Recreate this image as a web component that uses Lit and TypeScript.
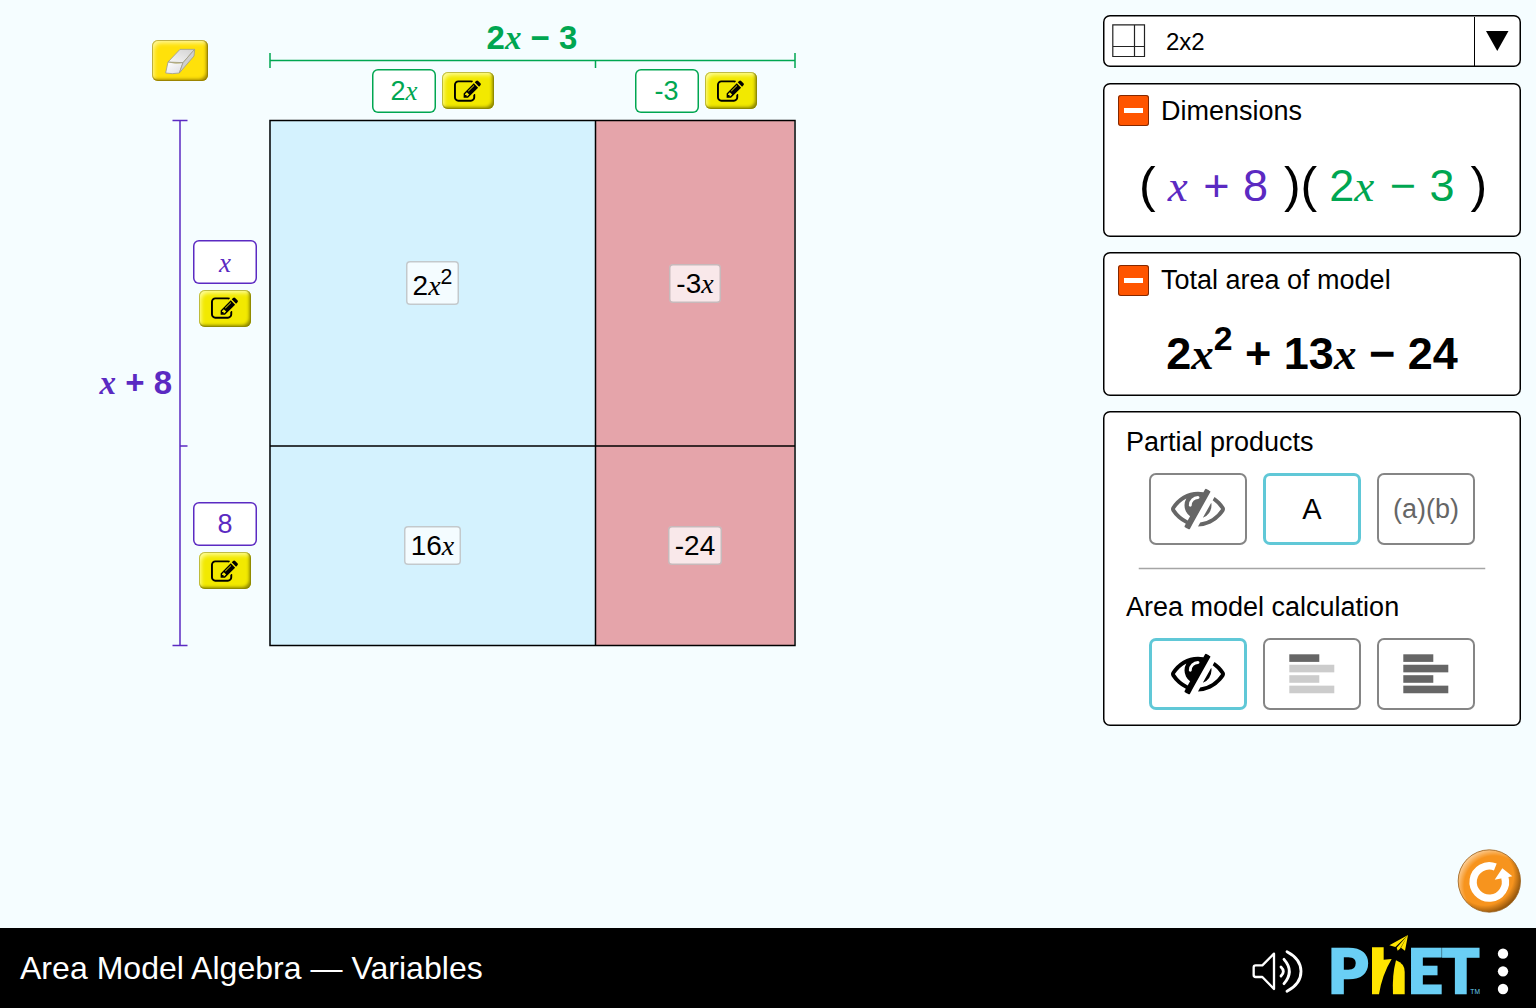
import { LitElement, html, css, svg } from "lit";
import { customElement, property } from "lit/decorators.js";
import { classMap } from "lit/directives/class-map.js";

const X = html`<i class="var">x</i>`;

const variableStyles = css`
  .var {
    font-family: "Liberation Serif", "Times New Roman", serif;
    font-style: italic;
    line-height: 0;
  }
`;

/** Yellow button with a pencil-and-square icon. */
@customElement("edit-button")
class EditButton extends LitElement {
  static styles = css`
    :host { display: block; width: 52px; height: 37px; flex: none; }
    .face {
      box-sizing: border-box; width: 52px; height: 37px; border-radius: 6px;
      background: #f2e900;
      box-shadow: inset 0 0 0 1px rgba(130, 125, 0, 0.5),
        inset -3px -3px 3px -1px rgba(125, 120, 0, 0.8),
        inset 3px 4px 4px -1px rgba(255, 255, 170, 0.9);
      display: flex; align-items: center; justify-content: center;
    }
    svg { display: block; margin-right: 1px; }
  `;
  render() {
    return html`<div class="face">
      <svg width="27" height="22" viewBox="0 110 1792 1440">
        <path d="M888 1184l116-116-152-152-116 116v56h96v96h56zm440-720q-16-16-33 1l-350 350q-17 17-1 33t33-1l350-350q17-17 1-33zm80 594v190q0 119-84.500 203.500t-203.500 84.500h-832q-119 0-203.500-84.500t-84.500-203.500v-832q0-119 84.500-203.500t203.500-84.500h832q63 0 117 25 15 7 18 23 3 17-9 29l-49 49q-14 14-32 8-23-6-45-6h-832q-66 0-113 47t-47 113v832q0 66 47 113t113 47h832q66 0 113-47t47-113v-126q0-13 9-22l64-64q15-15 35-7t20 29zm-96-738l288 288-672 672h-288v-288zm444 132l-92 92-288-288 92-92q28-28 68-28t68 28l152 152q28 28 28 68t-28 68z"/>
      </svg>
    </div>`;
  }
}

@customElement("collapse-button")
class CollapseButton extends LitElement {
  static styles = css`
    :host { display: block; width: 31px; height: 31px; flex: none; }
    .box {
      width: 31px; height: 31px; border-radius: 3px; background: #ff5500;
      box-shadow: inset 0 0 0 1px rgba(90, 25, 0, 0.75);
      display: flex; align-items: center; justify-content: center;
    }
    .bar { width: 19px; height: 5px; background: #fff; }
  `;
  render() {
    return html`<div class="box"><div class="bar"></div></div>`;
  }
}

@customElement("radio-tile")
class RadioTile extends LitElement {
  @property({ type: Boolean }) selected = false;
  static styles = css`
    :host { display: block; width: 98px; height: 72px; }
    .tile {
      width: 98px; height: 72px; border-radius: 7px; background: #fff; color: #666;
      box-shadow: inset 0 0 0 2px #858585;
      display: flex; align-items: center; justify-content: center;
      font-size: 27px; line-height: 30px;
    }
    .tile.selected { color: #000; box-shadow: inset 0 0 0 3px #60c8d7; }
  `;
  render() {
    return html`<div class=${classMap({ tile: true, selected: this.selected })}><slot></slot></div>`;
  }
}

@customElement("area-model")
class AreaModel extends LitElement {
  static styles = [
    variableStyles,
    css`
      :host { display: block; }
      .model {
        display: grid;
        grid-template-columns: 75px 16px 81px 526px;
        grid-template-rows: 53px 16px 51px 526px;
        padding-left: 97px;
      }
      .eraser {
        grid-column: 1 / 4; grid-row: 1 / 4;
        padding: 40px 0 0 55px;
      }
      .eraser-face {
        width: 56px; height: 41px; border-radius: 6px; background: #ffe10a;
        box-shadow: inset 0 0 0 1px rgba(130, 110, 0, 0.5),
          inset -3px -3px 3px -1px rgba(150, 125, 0, 0.8),
          inset 3px 4px 4px -1px rgba(255, 250, 170, 0.9);
        display: flex; align-items: center; justify-content: center;
      }
      .total { font-weight: bold; font-size: 33px; line-height: 38px; white-space: pre; }
      .total-x { grid-column: 4; grid-row: 1; color: #00a651; text-align: center; padding-top: 19px; }
      .total-y { grid-column: 1; grid-row: 4; color: #5b2ac2; text-align: right; align-self: center; }
      .line-x { grid-column: 4; grid-row: 2; }
      .line-y { grid-column: 2; grid-row: 4; }
      svg { display: block; overflow: visible; }
      .edits-x {
        grid-column: 4; grid-row: 3; display: grid;
        grid-template-columns: 326px 199px; justify-items: center; margin-left: 1px;
      }
      .edits-y {
        grid-column: 3; grid-row: 4; display: grid; padding-right: 7px;
        grid-template-rows: 326px 199px; align-items: center; justify-items: center;
      }
      .pair { display: flex; align-items: center; gap: 6px; height: 44px; }
      .edits-x edit-button { margin-top: -1px; }
      .edits-y .pair { flex-direction: column; height: auto; }
      .value {
        width: 64px; height: 44px; border-radius: 6px; background: #fff;
        font-size: 27px; line-height: 44px; text-align: center;
      }
      .value.single .var { position: relative; top: 1px; }
      .edits-x .value { color: #00a651; box-shadow: inset 0 0 0 1.5px #00a651; }
      .edits-y .value { color: #5b2ac2; box-shadow: inset 0 0 0 1.5px #5b2ac2; }
      .area { grid-column: 4; grid-row: 4; position: relative; }
      .cells { display: grid; grid-template-columns: 327px 198px; grid-template-rows: 326px 199px; }
      .cell { display: flex; align-items: center; justify-content: center; background: #d4f2fe; }
      .cell.negative { background: #e5a4aa; }
      .product {
        box-sizing: border-box; height: 39px; padding: 0 7px; border-radius: 4px;
        background: rgba(255, 255, 255, 0.75); box-shadow: inset 0 0 0 1.5px rgba(0, 0, 0, 0.2);
        font-size: 28px; line-height: 39px; white-space: nowrap;
      }
      .product.tall { height: 44px; line-height: 49px; }
      .sup { font-size: 0.76em; line-height: 0; position: relative; top: -0.5em; }
      .lines { position: absolute; inset: 0; }
    `,
  ];
  render() {
    return html`<div class="model">
      <div class="eraser">
        <div class="eraser-face">
          <svg width="32" height="26" viewBox="0 0 96 78">
            <defs>
              <linearGradient id="er" x1="0" y1="0" x2="1" y2="1">
                <stop offset="0" stop-color="#fff"/><stop offset="1" stop-color="#dcdce2"/>
              </linearGradient>
              <linearGradient id="er-top" x1="0" y1="1" x2="1" y2="0">
                <stop offset="0" stop-color="#f6f6f6"/><stop offset="1" stop-color="#d2d2d2"/>
              </linearGradient>
            </defs>
            <g stroke="#a09d8c" stroke-width="2.500" stroke-linejoin="round">
              <path d="M48 4H92L57 44L12 42Z" fill="url(#er-top)"/>
              <path d="M12 42Q34 48 57 44L46 75Q24 79 5 75Z" fill="url(#er)"/>
              <path d="M92 4L90 24L46 75L57 44Z" fill="#cfcfcf"/>
            </g>
          </svg>
        </div>
      </div>
      <div class="total total-x">2${X} − 3</div>
      <svg class="line-x" width="526" height="16" viewBox="269 53 526 16">
        <path d="M270 60.500H795M270 53V68M795 53V68M595.500 60.500V68" fill="none" stroke="#00a651" stroke-width="1.500"/>
      </svg>
      <div class="edits-x">
        <div class="pair"><div class="value">2${X}</div><edit-button></edit-button></div>
        <div class="pair"><div class="value">-3</div><edit-button></edit-button></div>
      </div>
      <div class="total total-y">${X} + 8</div>
      <svg class="line-y" width="16" height="526" viewBox="172 120 16 526">
        <path d="M180 120.500V645.500M172.500 120.500H187.500M172.500 645.500H187.500M180 446H187.500" fill="none" stroke="#5b2ac2" stroke-width="1.500"/>
      </svg>
      <div class="edits-y">
        <div class="pair"><div class="value single">${X}</div><edit-button></edit-button></div>
        <div class="pair"><div class="value">8</div><edit-button></edit-button></div>
      </div>
      <div class="area">
        <div class="cells">
          <div class="cell"><div class="product tall">2${X}<span class="sup">2</span></div></div>
          <div class="cell negative"><div class="product">-3${X}</div></div>
          <div class="cell"><div class="product">16${X}</div></div>
          <div class="cell negative"><div class="product">-24</div></div>
        </div>
        <svg class="lines" width="526" height="526" viewBox="269 120 526 526">
          <path d="M270 120.500H795V645.500H270ZM595.500 120.500V645.500M270 446H795" fill="none" stroke="#000" stroke-width="1.500"/>
        </svg>
      </div>
    </div>`;
  }
}

const eye = html`<svg class="icon" width="54" height="54" viewBox="0 60 1792 1792" fill="currentColor">
  <path d="M555 1335l78-141q-87-63-136-159t-49-203q0-121 61-225-229 117-381 353 167 258 427 375zm389-759q0-20-14-34t-34-14q-125 0-214.500 89.500t-89.500 214.500q0 20 14 34t34 14 34-14 14-34q0-86 61-147t147-61q20 0 34-14t14-34zm363-191q0 7-1 9-105 188-315 566t-316 567l-49 89q-10 16-28 16-12 0-134-70-16-10-16-28 0-12 44-87-143-65-263.500-173t-208.500-245q-20-31-20-69t20-69q153-235 380-371t496-136q89 0 180 17l54-97q10-16 28-16 5 0 18 6t31 15.500 33 18.500 31.500 18.500 19.500 11.500q16 10 16 27zm37 447q0 139-79 253.500t-209 164.500l280-502q8 45 8 84zm448 128q0 35-20 69-39 64-109 145-150 172-347.500 267t-419.500 95l74-132q212-18 392.500-137t301.500-307q-115-179-282-294l63-112q95 64 182.500 153t144.500 184q20 34 20 69z"/>
</svg>`;

const bars = (colors: string[]) => html`<svg class="icon" width="46" height="40" viewBox="0 0 46 40">
  ${colors.map((c, i) => svg`<rect x="0.300" y=${0.3 + i * 10.45} width=${i % 2 ? 45 : 30} height="7.600" fill=${c}/>`)}
</svg>`;

@customElement("app-root")
class AppRoot extends LitElement {
  static styles = [
    variableStyles,
    css`
      :host {
        display: flex; flex-direction: column; width: 1536px; height: 1008px; overflow: hidden;
        font-family: "Liberation Sans", Arial, sans-serif; color: #000; background: #f5fdff;
      }
      svg { display: block; }
      .stage { height: 928px; display: flex; justify-content: space-between; }
      .side { width: 418px; margin-right: 15px; display: flex; flex-direction: column; height: 928px; }
      .panel { box-sizing: border-box; border-radius: 7px; background: #fff; box-shadow: inset 0 0 0 1.5px #000; }
      .combo { height: 52px; margin-top: 15px; display: flex; align-items: center; }
      .combo-icon { margin-left: 9px; }
      .combo-text { font-size: 24px; line-height: 28px; margin-left: 20px; padding-top: 2px; flex: 1; }
      .combo-arrow {
        width: 46px; height: 49px; border-left: 1px solid #000;
        display: flex; align-items: center; justify-content: center;
      }
      .combo-arrow svg { margin-right: 1px; }
      .dims { height: 154px; margin-top: 16px; padding-top: 12px; }
      .dims .head span { padding-top: 2px; }
      .sum { height: 144px; margin-top: 15px; padding-top: 13px; }
      .head { display: flex; align-items: center; height: 31px; padding-left: 15px; gap: 12px; font-size: 27px; }
      .formula { display: flex; white-space: pre; font-size: 45px; line-height: 60px; }
      .factors { padding-left: 36px; margin-top: 30px; word-spacing: 1px; }
      .factors .var { padding-right: 2px; }
      .paren { font-size: 50px; line-height: 58px; }
      .fx { color: #5b2ac2; margin: 0 16px 0 12px; }
      .fy { color: #00a651; margin: 0 16px 0 12px; }
      .polynomial { justify-content: center; font-weight: bold; margin-top: 28px; }
      .sup { font-size: 0.75em; position: relative; top: -0.56em; line-height: 0; }
      .options { height: 315px; margin-top: 15px; padding-top: 16px; }
      .label { font-size: 27px; line-height: 30px; padding-left: 23px; }
      .tiles { display: flex; gap: 16px; padding-left: 46px; margin-top: 16px; }
      .letter { font-size: 29px; }
      .raised { padding-bottom: 1px; }
      .rule { height: 1px; margin: 23px 36px 0; background: #a5a5a5; box-shadow: 0 0 0 0.25px #a5a5a5; }
      .label.second { margin-top: 23px; }
      .reset { align-self: flex-end; margin-top: auto; margin-bottom: 15px; }
      .footer {
        height: 80px; background: #000; color: #fff; display: flex; align-items: center; justify-content: space-between;
      }
      .title { font-size: 32px; line-height: 40px; padding-left: 20px; letter-spacing: 0.03px; }
      .brand { flex: none; }
      .logo-text {
        font-family: Lato, "Open Sans", sans-serif; font-weight: 900; font-size: 182px;
        fill: #6acff5; stroke: #6acff5; stroke-width: 8px;
      }
      .tm { font-family: "Liberation Sans", sans-serif; fill: #6acff5; }
    `,
  ];

  render() {
    return html`
      <div class="stage">
        <area-model></area-model>
        <div class="side">
          <div class="panel combo">
            <svg class="combo-icon" width="34" height="34" viewBox="0 0 34 34">
              <path d="M0.800 0.800H32.500V32.500H0.800ZM22.500 0.800V32.500M0.800 22.500H32.500" fill="none" stroke="#222" stroke-width="1.200"/>
            </svg>
            <span class="combo-text">2x2</span>
            <div class="combo-arrow">
              <svg width="23" height="20" viewBox="0 0 23 20"><path d="M0 0H22.500L11.250 20Z"/></svg>
            </div>
          </div>

          <div class="panel dims">
            <div class="head"><collapse-button></collapse-button><span>Dimensions</span></div>
            <div class="formula factors"><span class="paren">(</span><span class="fx">${X} + 8</span><span class="paren">)</span><span class="paren">(</span><span class="fy">2${X} − 3</span><span class="paren">)</span></div>
          </div>

          <div class="panel sum">
            <div class="head"><collapse-button></collapse-button><span>Total area of model</span></div>
            <div class="formula polynomial"><span>2${X}<span class="sup">2</span> + 13${X} − 24</span></div>
          </div>

          <div class="panel options">
            <div class="label">Partial products</div>
            <div class="tiles">
              <radio-tile>${eye}</radio-tile>
              <radio-tile selected><span class="letter">A</span></radio-tile>
              <radio-tile><span class="raised">(a)(b)</span></radio-tile>
            </div>
            <div class="rule"></div>
            <div class="label second">Area model calculation</div>
            <div class="tiles">
              <radio-tile selected>${eye}</radio-tile>
              <radio-tile>${bars(["#666", "#ccc", "#ccc", "#ccc"])}</radio-tile>
              <radio-tile>${bars(["#666", "#666", "#666", "#666"])}</radio-tile>
            </div>
          </div>

          <svg class="reset" width="64" height="64" viewBox="0 0 192 192">
            <defs>
              <radialGradient id="dark" cx="0.420" cy="0.420" r="0.600">
                <stop offset="0.780" stop-color="#f7941e"/><stop offset="1" stop-color="#94560c"/>
              </radialGradient>
              <radialGradient id="light" cx="0.580" cy="0.580" r="0.620">
                <stop offset="0.780" stop-color="#fff" stop-opacity="0"/><stop offset="1" stop-color="#fff" stop-opacity="0.600"/>
              </radialGradient>
            </defs>
            <circle cx="97" cy="96" r="93.500" fill="url(#dark)"/>
            <circle cx="97" cy="96" r="93.500" fill="url(#light)" stroke="#9c6420" stroke-width="2.500"/>
            <path d="M115 54A48.500 48.500 0 1 0 143 84" fill="none" stroke="#fff" stroke-width="22"/>
            <path d="M136 58L166 82L113 92Z" fill="#fff"/>
          </svg>
        </div>
      </div>

      <div class="footer">
        <span class="title">Area Model Algebra — Variables</span>
        <svg class="brand" width="296" height="80" viewBox="0 9 888 240">
          <g fill="none" stroke="#fff" stroke-linejoin="round" stroke-linecap="round">
            <path d="M47 121H67L102 86V192L67 156H47Q41 156 41 150V127Q41 121 47 121Z" stroke-width="7"/>
            <path d="M123 126Q137 139 123 153M132 103Q164 139 132 176M141 80Q183 102 183 139Q183 177 141 199" stroke-width="8.500"/>
          </g>
          <text class="logo-text" x="264" y="204" textLength="120" lengthAdjust="spacingAndGlyphs">P</text>
          <text class="logo-text" x="503" y="204" textLength="214" lengthAdjust="spacingAndGlyphs">ET</text>
          <g fill="#ffe500">
            <path d="M396 67H431V104L455 102Q426 150 417 208H396Z"/>
            <path d="M468 106Q494 116 494 140V208H459Q456 150 468 106Z"/>
            <path d="M504 30L448 61L466 66ZM504 30L470 68L473 77L480 71ZM504 30L483 68L495 77Z"/>
          </g>
          <text class="tm" x="691" y="207" font-size="20">TM</text>
          <g fill="#fff"><circle cx="789" cy="86" r="15.500"/><circle cx="789" cy="139" r="15.500"/><circle cx="789" cy="192" r="15.500"/></g>
        </svg>
      </div>
    `;
  }
}
